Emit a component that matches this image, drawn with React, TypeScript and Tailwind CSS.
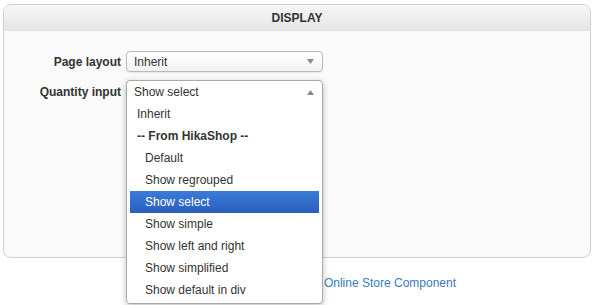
import React from "react";

const font = { fontFamily: '"Liberation Sans", Arial, Helvetica, sans-serif' };

function Arrow({ up }: { up?: boolean }) {
  return (
    <svg width="7" height="5" viewBox="0 0 7 5" className="shrink-0">
      {up ? <path d="M0 5 L3.5 0 L7 5 Z" fill="#8a8a8a" /> : <path d="M0 0 L3.5 5 L7 0 Z" fill="#8a8a8a" />}
    </svg>
  );
}

const options: { label: string; indent?: boolean; group?: boolean; selected?: boolean }[] = [
  { label: "Inherit" },
  { label: "-- From HikaShop --", group: true },
  { label: "Default", indent: true },
  { label: "Show regrouped", indent: true },
  { label: "Show select", indent: true, selected: true },
  { label: "Show simple", indent: true },
  { label: "Show left and right", indent: true },
  { label: "Show simplified", indent: true },
  { label: "Show default in div", indent: true },
];

export default function App() {
  return (
    <div className="relative w-[602px] h-[305px] bg-white text-[12px] text-[#333] overflow-hidden" style={font}>
      <div className="ml-[3px] mt-[4px] w-[588px] h-[254px] rounded-[8px] border border-[#cfcfcf] bg-[#fafafa] flex flex-col overflow-hidden">
        <div className="h-[26px] shrink-0 flex items-center justify-center font-bold text-[12px] text-[#333] border-b border-[#e2e2e2] bg-gradient-to-b from-[#f6f6f6] to-[#e6e6e6]">
          DISPLAY
        </div>
        <div className="flex flex-col gap-[8px] pt-[20px]">
          <div className="flex items-center">
            <div className="w-[122px] pr-[5px] text-right font-bold">Page layout</div>
            <div className="w-[197px] h-[21px] rounded-[4px] border border-[#b9b9b9] bg-gradient-to-b from-white to-[#f2f2f2] shadow-[0_1px_1px_rgba(0,0,0,0.08)] flex items-center justify-between pl-[7px] pr-[8px]">
              <span>Inherit</span>
              <Arrow />
            </div>
          </div>
          <div className="flex items-start">
            <div className="w-[122px] pr-[5px] text-right font-bold pt-[3px]">Quantity input</div>
            <div className="w-[197px] h-[22px]" />
          </div>
        </div>
      </div>

      <div className="mt-[16px] flex justify-end pr-[146px] text-[#3a7bbf] text-[12px] whitespace-nowrap">
        Online Store Component
      </div>

      <div className="absolute left-[126px] top-[80px] w-[197px] h-[224px] rounded-[4px] border border-[#a9a9a9] bg-white shadow-[0_2px_6px_rgba(0,0,0,0.25)] flex flex-col">
        <div className="h-[22px] shrink-0 flex items-center justify-between pl-[7px] pr-[8px]">
          <span>Show select</span>
          <Arrow up />
        </div>
        <div className="flex flex-col px-[3px]">
          {options.map((o) => (
            <div
              key={o.label}
              className={
                "h-[22px] flex items-center " +
                (o.indent ? "pl-[15px] " : "pl-[7px] ") +
                (o.group ? "font-bold " : "") +
                (o.selected ? "bg-gradient-to-b from-[#3b7bd8] to-[#2a5fbf] text-white" : "text-[#333]")
              }
            >
              {o.label}
            </div>
          ))}
        </div>
      </div>
    </div>
  );
}
